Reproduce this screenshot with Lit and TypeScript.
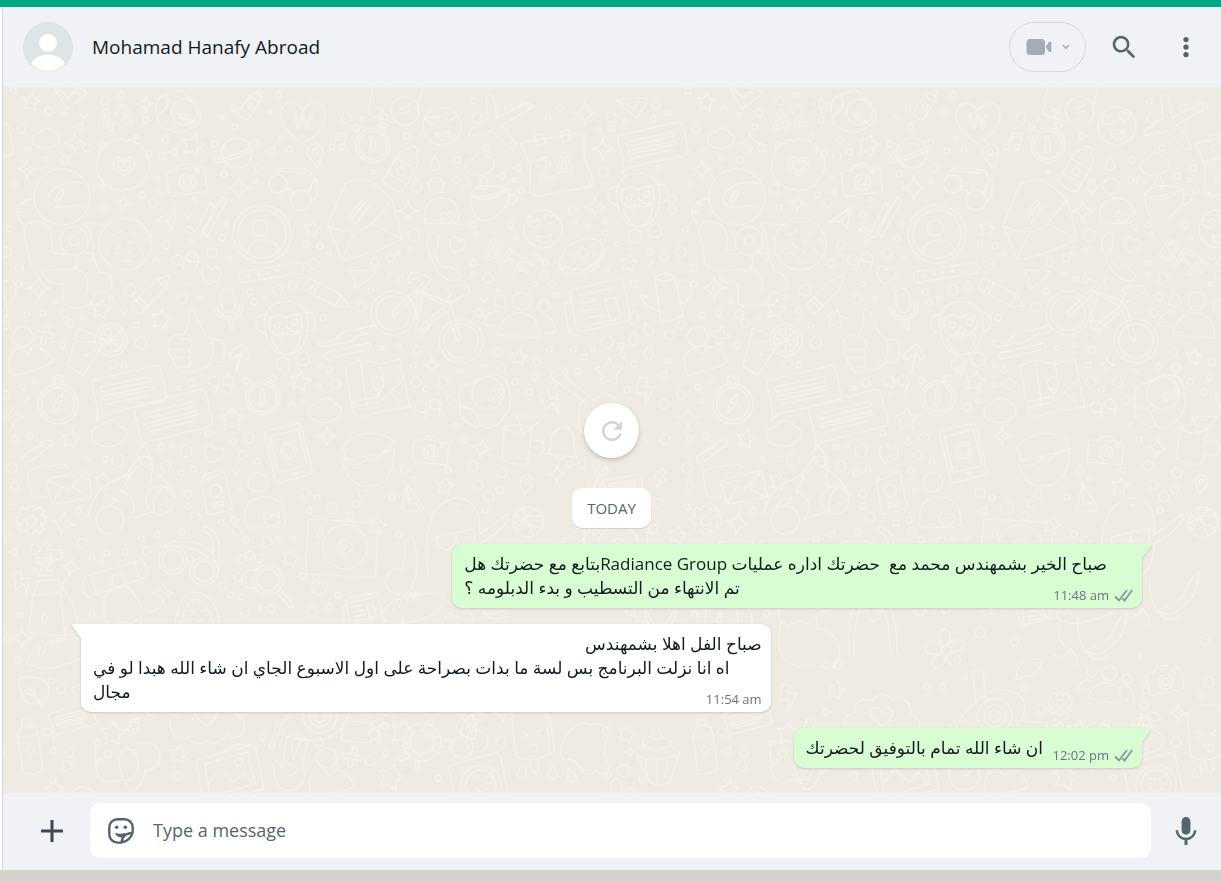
import { LitElement, html, svg, css, nothing } from "lit";
import { customElement, property } from "lit/decorators.js";

type Placement = [name: string, x: number, y: number, rotate?: number, scale?: number];

const TILE_WIDTH = 675;
const TILE_HEIGHT = 1000;

const ring = (x: number, y: number, r: number) =>
  `M${x - r} ${y}a${r} ${r} 0 1 0 ${2 * r} 0a${r} ${r} 0 1 0 ${-2 * r} 0`;

const HEART = "M0 8C-5 5-9 1-8-4C-7-8-2-8 0-4C2-8 7-8 8-4C9 1 5 5 0 8z";

const MOTIFS: Record<string, string> = {
  star: "M0-10L3-4L10-3L5 2L6 9L0 6L-6 9L-5 2L-10-3L-3-4z",
  spark: "M0-11Q1-1 11 0Q1 1 0 11Q-1 1-11 0Q-1-1 0-11z",
  heart: HEART,
  cloud: "M-12 6C-16-1-10-6-6-5C-3-12 7-11 8-5C15-4 15 4 9 7C4 12-8 11-12 6z",
  badge:
    "M-26 0q-3-5 2-8q-2-6 4-8q0-6 6-6q3-5 8-2q5-5 9 0q6-3 9 2q6 0 6 6q6 2 5 8q5 3 2 8q3 5-2 8q1 6-5 8q0 5-7 6q-3 4-8 2q-5 4-9 0q-6 3-9-3q-6 0-7-6q-5-2-4-8q-3-3 0-7z" +
    "M0 11C-6 7-12 3-11-3C-9-9-3-9 0-5C3-9 9-9 11-3C12 3 6 7 0 11zM0 7C-4 4-8 1-7-2C-6-6-2-5 0-2C2-5 6-6 7-2C8 1 4 4 0 7z",
  camera:
    "M-17-11h7l4-5h11l4 5h6q4 0 4 4v17q0 4-4 4h-31q-4 0-4-4v-17q0-4 3-4zM-3-12h7" +
    ring(0, 2, 8) + ring(0, 2, 4) + ring(12, -7, 2),
  planet: ring(0, 0, 15) + "M-12-6C-25 3-26 12-16 9C-2 6 26-4 21-12C19-14 15-12 12-10M-15 2C-22 7-18 8-12 5C2 1 24-9 16-9",
  pin: "M0 12C-4 5-8 1-8-4A8 8 0 0 1 8-4C8 1 4 5 0 12z" + ring(0, -4, 3),
  music: "M-3 7V-8L8-11V4" + ring(-5, 8, 3) + ring(6, 5, 3) + "M-3-4L8-7",
  sunglasses:
    ring(-17, -2, 9) + ring(6, 14, 10) + "M-9 4Q-3 2-2 8M-22-10Q-20-18-12-18L12-16Q18-14 17-10M-18-15L10-13M15 17L22 10V-6Q20-9 18-4L14 6",
  astronaut:
    ring(-5, -36, 28) +
    "M19-49C8-53-16-50-19-35C-20-20 2-28 19-28M-12-33l5-9q3-2 4 1l-5 9q-3 2-4-1z" +
    "M-33-35q-14 2-17 12q-1 11 8 15M-40-28l-5-3M-44-21l-6-1M-29-11Q-42-13-43-1L-37 29Q-35 36-28 36L5 37Q14 34 9 22L-15 20V5Q-17-10-29-11" +
    ring(7, 8, 14) + ring(7, 8, 5) +
    "M-24 38q0 12 20 13v18q6 8 20 5q12-3 12-14q18 0 17-11q-3-11-13-10l-4-12q-4-11-10-6M9 36q14 4 11 22M25 28q5-15-7-39l28 4",
  cookie: ring(0, 0, 26) + "M-12-9l9-4M-10 8l4 3M3-3l4 2M7-12l3 3M14 4l3 6M-4 4l-3-4M4 6l-1 4M-2 17h8M19-6l3 4M-21 4l6 6",
  send: "M-12 5L9-10L5 12L0 4zM0 4L6-5",
  checks: "M-19 9l4-4l8 6l14-29l5 3L-3 17zM-1 10l5 6l20-37l-5-3L4 5",
  profile: ring(0, 0, 29) + ring(0, 0, 24) + ring(-2, -6, 8) + "M-15 19Q-11 6 1 6Q13 6 17 15",
  password: "M-30-5h60q6 5 0 11h-60q-6-5 0-11z" + ring(-22, 0, 1) + ring(-12, 0, 1) + ring(-3, 0, 1) + ring(6, 0, 1),
  quotes: "M-3 9Q0 3-2 1Q-11 2-12-4Q-9-11-3-8Q3-3-3 9zM11 6Q14 0 12-2Q3-1 2-7Q5-14 11-11Q17-6 11 6z",
  pencil: "M-27-7h40l14 7l-14 7h-40q-4-6 0-14zM13-7v14M-20-7v14M-15-7v14",
  mic: "M-7-14a7 7 0 0 1 14 0v12a7 7 0 0 1-14 0zM-15-3q1 15 15 15t15-15M-12-3q1 12 12 12t12-12M-2 12l1 11q3 1 3-1V12",
  monkey:
    "M-20 4Q-27-27 0-29Q27-27 21 4Q17 24 0 25Q-17 24-20 4zM-21-16q-10 1-9 11q2 7 8 8M20-18q10 0 10 10q-1 8-8 10" +
    "M0-12Q-10-19-17-10Q-18 2-10 6Q-2 4 0-5Q6 5 13 1Q19-7 14-14Q6-18 0-12z" + ring(-9, -5, 3) + ring(9, -8, 3) +
    "M-14 9q4 14 14 16M-10 7q8-9 14-2l10-2q2 12-10 22M-6 10l3-6M0 8l2-4" + ring(-3, 34, 7) + ring(17, 29, 7),
  person: ring(-3, -17, 10) + "M-19 20q-5-25 12-26l7 7l6-7q14 4 18 18q-17 7-43 8z",
  lover: ring(-6, -23, 8) + "M-16 15q-5-24 14-26q20 0 19 21q-1 4-6 4zM4 14q-8-7-4-11q4-1 5 2q4-4 7 1q2 5-8 8z",
  drink: "M-15-22l-10 38l15 9l23-35zM-16-9l30 2" + ring(18, -10, 16) + ring(18, -10, 12) + "M8-10h20M18-20v20M11-17l14 14M25-17l-14 14" + ring(-7, 5, 1) + ring(2, 0, 1),
  thumb: "M-24-4q1-6 15-7q7-10 4-22q3-5 7 0q3 13 12 24l3 3l12 1q6 12-1 22h-9Q10 26-5 27q-12 1-11-5q-6-5-4-8q-5-5-4-9zM-22 5h16M-20 13h16M-16 22h12M-12-6h8q5 5 0 11q3 4 0 8q3 5 0 9M17 17q5-12 1-21",
  arrow: "M-4 15l5-16l-9 5l-4-3q4-6 14-12q4 4 8 14l-5 2l-4-7l-4 18q-2 3-1-1z",
  wrench: "M-26 3q10 3 17-1q6-9 20-9l18-5q5 4 0 7l-16 4q-6 8-20 7q-12 5-20 2zM-20 16l44-10q4 3 1 6l-44 10q-5-2-1-6z",
  speech: "M-34-17l67-1q5 1 5 6v28q-1 4-5 4h-64l-9 6l4-9V-13q0-3 2-4zM-27-8H24q4 3 0 5H-27q-3-3 0-5zM-27 2H24q3 3 0 4H-27q-3-2 0-4zM-25 11H18",
  compass: ring(0, 3, 20) + ring(0, 3, 16) + ring(0, -20, 6) + ring(0, -20, 3) + "M-5 12l2-12l8-8l-2 12zM-3 0l6 4",
  clock: ring(0, 0, 17) + ring(0, 0, 14) + "M-1-9q4 5 3 13q-3 6-6 3q3-7 1-15zM5-20q5-5 9 0l-3 4zM-15-14q-6 0-4-6q4-1 6 2z",
  envelope: "M-34 4L-17-37q12-7 27-2l20 17l10 40Q10 34-20 39L-34 4M-34 5Q-6 17 10 3L29-20M-20 38L-8 13M10 3q11 4 29 15M-13-4l13-17l3 2L-10-2zM-6 3l14-20",
  ticket: "M-24-24l-5 30l25 9M27-25l-7 28" + ring(8, 3, 14) + "M3 1l10-4M3 6l10-3M-21-1l12 9M-17 8l5-11M-14-25l2 4M10-22l2-3",
  smiley: ring(0, 0, 19) + "M-6 7Q2 9 8 5Q8 14 0 14Q-5 12-6 7zM-9-1q-9-4-5-8q4-1 5 2q3-5 6-1q1 4-6 7zM7-5q-8-4-4-9q3-1 5 2q4-4 6 0q1 4-7 7z",
  plane: "M-14-27q4-5 8 1l3 20l27-14q5-4 9 3l-31 18l14 19q-1 9-7 4L-8 7l-23 5q-1-6 6-9l13-9zM18-14l4-9q8 2 6 8",
  calendar: "M-36-25l61-11q3 0 2 4v20l10 26q-1 4-5 5l-50 9q-7 0-9-5v-26l-9-20zM-22-33l8-1l2 9l-8 3zM4-37l8-1l2 9l-8 3zM-24 23l3 5l54-10v-5M-28-7q12 0 20-5",
  plane2: "M-17-4l29-2q3 1 2 4l-10 16zM-17-4L2 5M2 5l3-7l5 0",
  bottle: "M-4-24h8v5q7 4 7 12v28q-10 5-22 0V-7q0-8 7-12zM-11-5h22M-11 12h22" + ring(0, 4, 4),
  cup: "M-22-7q15 12 38-6q4 12-8 24q-8 8-18 8q-11-4-12-26zM-22-7q7-15 38-6M-19-6q11 3 32-6M17-7q9-2 8 3q-2 7-11 7" ,
  phone: "M-13-17q5-5 9 0v11q0 3-4 4q1 10 10 18q5-4 9 0l8 7q-2 7-9 6Q-4 25-10 8Q-18-7-13-17z",
  donut: "M-23 6Q-17-14 5-17Q21-18 22-6Q21 12 3 18Q-17 22-21 13q-3-4-2-7zM-23 6l4 7l5-3l4 5l5-3l5 3L16 5l6-9" + ring(1, -3, 5) + "M-12 0l3-4M-7 6l-3-1M8-9l5-2M13-3l-3 3M3 6l3-2",
  nav: "M-14-9l26 1q0 4-20 18q0-11-6-19z",
  bicycle:
    ring(-34, -8, 22) + ring(-34, -8, 17) + ring(34, 20, 22) + ring(34, 20, 17) +
    "M-35-9l31-29l-8-5l-4 5q-6-2-2-7q3-9 22 3l-4 6l-33 32zM-10-31l24 9q8 3 11 9l9 30q-2 5-5 1l-9-29l-21 19h-10zM-5-27l24 12l-21 16l-7-2zM23-35h18q5 7-4 9l-12 7l-5-4l5-5q-8-1-2-7z" + ring(-2, 6, 4) + "M-2 11l-6 7M2 5l5-5",
  group: ring(0, -21, 9) + ring(-22, -21, 6) + ring(22, -16, 6) + "M-24 13q4-22 22-22q19 0 19 25zM-27 4l-12-1q4-16 17-13M21-7q12 2 13 17l-12 1",
  news: "M-24-19l46-10q5 0 5 4l6 34q0 3-3 4l-46 11q-4 0-5-3l-6-36q0-3 3-4zM-24-7l-9 2l5 29q3 5 10 3M-18-13l32-6M-17-5l17-3M-15 3l17-3M-13 11l19-4M-13 18l32-6M8-8l10-3l6 20l-11 3z",
  can: "M-12-19q9-10 20-2l8 38q-11 8-22 6zM-12-19q13 5 20-2M10-15q14-9 14 7q0 10-9 14M-7 6L-18 1q-5-5-8-4q1 11 22 18",
  drop: "M0-7Q7 4 3 6Q-1 9-4 5Q-6 1 0-7z",
  map: "M-32-20l15-6l20 4l20-5l10 48l-26 4l-20 5q-9 0-11-5zM-17-26l7 46M3-22l3 17M-24 21l26-5l26-24M-24 16l26-6M12 6l12 10M3-5" + ring(1, -3, 6) + "M-4 0l6 8l4-9",
  planet2: ring(1, -3, 16) + "M-17-12Q-30-15-27 12q17-3 20 17q11 9 24-8Q29 9 19-16Q9-28-17-12M-27 12q-3 12 17 19M2 5q0-13 14-12q2 8-14 12zM4 4l10-10",
  guitar: "M-34-25q-1-9 9-9l9 11l25 20q14-11 23 1q7 14-7 24q-1 13-13 13Q-12 31-5 14Q-9-2 0-1L-25-19zM-35-18l5-5M-31-14l4-6M-22-37l5 5M-17-32l-4 5" + ring(7, 14, 6),
  bolt: "M-6-12l9 1l-3 8l9 1l-9 17l1-12l-10 2z",
  clip: "M-14 5L6-9q9-5 9 2L-4 8q-8 6-11 1q-1-4 7-8L6-6",
  mail: "M-13 15h-11q-4 0-5-4L-32-8q0-4 3-5L2-18q4 0 5 4M-12-3l37-8q2 0 3 3l4 20q0 3-3 4L-5 22q-3 0-4-3l-5-18q0-3 2-4zM-13-2L9 8L26-10M-7 20L2 5M30 15L13 5",
  scooter: ring(-22, 30, 14) + ring(28, 10, 14) + "M-44 26Q-37-5-14-10q13-11 11-2l-8 13Q11 11-3 29l25-8q-2-15 8-23Q17-2 19-12Q25-40 6-32L-6-15l1 3L6-24M6-40q1 17 11 17q7-8-6-22M14-23q13 4 28 25q4 8-15 13M-30 17q0-7 15-9q-3 9-15 9z",
  gear: "M-3-14h6l1 4l5-3l4 5l-3 3l5 2l0 6l-5 1l3 5l-4 4l-5-3l-1 4h-6l-1-4l-5 3l-4-4l3-5l-4-1v-6l4-2l-3-3l4-5l5 3z" + ring(0, 1, 5),
  device: "M-18-29h32q5 0 5 5v49q0 5-5 5h-32q-5 0-5-5v-49q0-5 5-5zM-18-22h33v41h-33z" + ring(-1, -2, 9) + ring(-1, -2, 6) + ring(-1, 25, 2),
  pack: "M-15-15l25-5v35q0 4-4 4h-18q-4 0-4-4zM-15-15l5-6l14-1l6 2" + ring(-3, -3, 6) + "M-8 9h10v4h-10z",
  glasses: ring(-19, 0, 14) + ring(-19, 0, 10) + ring(12, 11, 14) + ring(12, 11, 10) + "M-6-3q7-3 8 4M-31-13l10-5q30-4 42 12M-31-13Q0-18 16-2M27 10V-14q-1-17-16-20v5q10 4 10 12v14",
  record: "M-34-26h62q4 0 4 4v47q0 4-4 4h-62q-4 0-4-4v-47q0-4 4-4z" + ring(0, 0, 22) + ring(0, 0, 7) + ring(0, 0, 2) + "M-29-8l3-11l4 7z",
  zzz: "M-3-14l4 9h10l2 8l-15 4l-2-5h6l-8-14zM-14 2l18 3l-9 10l7 1v4l-14 1l6-12l-8-2z",
  milk: "M-17-15l5-14l20-2l8 15q11 10 12 38q-4 3-14 3h-27q-7 0-8-4l4-36zM-17-15l27-3l5 43M10-18l5-12M-5 4q4 5 0 9q-7-1 0-9",
  board: "M-30-2Q-38 9-28 19l56-19q7-7-2-18zM-24-4l4 20M18-18l5 18" + ring(3, 3, 7) + "M-12 40V20q20-25 32 0q10 20 22 10",
  paw: ring(5, 0, 15) + ring(5, 0, 11) + "M14 13l13 15q5-1 2-5L18 10M-8 8q-16 0-12-12q1-6 17-7" + ring(-21, -21, 4) + ring(-13, -25, 4) + ring(-4, -22, 4) + ring(-25, -3, 4),
  face: "M-24 40q-2-60 20-64q28 0 28 60M-19 40q-1-50 16-57q20 2 21 57M-10-4q3-5 6 0M4-4q4-5 7 0M-2 4q3 4 6 0",
  bread: "M-28 10Q-26-8 0-12l30-4q10 6-5 22Q-12 22-28 10zM-17 3q3-14 8-12q0 6-2 8q4-14 9-12l-2 9q4-12 9-11l-3 9q4-11 10-10",
  leaf: "M-14-12Q12-16 16-2Q17 9 7 13Q-13 20-14-12zM-5-4L11 18M1-2l1 8l-9-3",
  can2: "M-10-16q1-8 10-9q9 1 10 9v38q-10 4-20 0zM-10-14h20M-4-25v-6h8v6" + ring(0, 0, 4),
  dog: "M-34-22q-4 43 18 35l20-2M-5 13q-14-26 4-35q28-11 31 10q1 12-14 15q-7 22-17 18zM-4-20q19 8 9 28" + ring(18, -6, 1) + "M29-8q-6 4 0 6",
  picture: "M-28-8l52-14q4 0 5 4l8 40l-60 14l-8-38q0-5 3-6zM-22-3l43-12l7 32l-45 13zM-18 16L-7 2l14 13l10-10l9 12M-10-13l22-10l10 2" + ring(12, -5, 4),
  peace: "M-16 4q3-7 6 0l2 4L-4-20q1-5 5-4L3 0l8-20q7-3 6 4L12 5q6 11-1 20q-10 9-22 2q-7-11-5-23zM-8 6q10-4 16 3q-6 9-10 6",
  burger: "M-25-10q17-21 43-12q12 5 7 9l-10 8l-35 7zM-23 0l6 7l10-1l7-5l8 2l6-7l11-4M-24 5q4 17 17 22Q28 34 27-10",
  mug: "M-14-17q15-7 28 0l-2 34q-12 5-26-2zM-14-17q10 9 28 0M14-5q13-5 13 6q-1 10-14 7",
  bell: "M-12 10q4-4 3-14q2-12 12-11q9 3 9 15q1 8 4 11zM-4 11q2 6 8 0M2-15q1-5 4 0",
  dude: "M-24 32Q-35-41 4-47Q30-45 26-10l27-20q4-1 3 3Q45-10 26-1q0 24-15 34M-17-8l38-8q3 17-9 18q-9 0-9-13q-1 15-9 16q-11-2-11-13" + ring(5, -40, 1),
  ball: ring(0, 0, 15) + "M-15 2Q0-8 14-6M-6-14Q-1 0 5 14M-12 8Q1-8 6-14M-12-8Q3 6 15 6",
  arm: "M-14 27q-12-6-4-20q4-6 14-3l2-19q-1-13 7-15q10 25 2 45Q2 35-14 27z",
  video: "M-17-10h28q3 0 3 4v3l8-6v20l-8-5v3q0 3-3 3h-28q-3 0-3-3v-16q0-3 3-3z",
  turtle: ring(0, 0, 19) + ring(0, 0, 12) + "M-5-12l2-7M9-8l5-6M-11-4l-7-3M-9 9l-5 6M4 12l2 7M12 2l7 2M-3-20q3-10 6 0M18-10q10-8 10 3l-8 3M-18-8l-9-4l1 8M-10 17l-6 8q6 3 11-6M6 19l2 8q-4 4-5-7",
  cherry: ring(-6, 9, 11) + ring(9, 3, 11) + "M-8-2Q-6-18 4-24L8-7M4-24q10-4 14 4q-8 7-14-4",
  pop: "M-18-24q16-14 34-4v46q-18 9-34 0zM-4 22v11q5 5 8 0V22M16-22q5 2 5 38l-5 3M-9-6l5 3l-5 3M9-6l-5 3l5 3M-4 8h9q1 7-4 7z",
  splash: "M-16-13q9-14 21-8q18-3 16 10q-8 16 2 28q-4 10-13 3q-8 8-14-2q-5-9-16-8q-6-8 4-23z",
  cake: "M-21 0q-2-9 8-8q-5-10 8-10q-1-8 5-9q6 5 5 10q12 0 8 9q12 1 8 9L13 27q-12 7-21-1zM-21 1q16 7 41-1M-11 7l2 18M0 7v20M11 5L9 23M-12-8q9 6 24-1M-5-18q6 4 11-1",
  cross: "M-3-10q3-3 5 0l0 6l6-1q3 2 0 5l-6 1l1 7q-3 4-5 0v-6l-7 1q-4-3 0-5l7-2z",
  card: "M-34-14L13-27q5 0 6 5l9 44L-23 36z" + ring(-1, 5, 20) + ring(-1, 5, 15) + "M-9 0q4-4 7 0M-7 8q6 6 13 0" + ring(7, 0, 4),
  flower: ring(0, 0, 5) + "M-4-4q-8-14 2-17q11 3 3 16q11-11 17-2q2 9-13 8q14 7 7 14q-8 4-12-8q-4 15-12 10q-5-6 5-13q-15 2-14-7q5-8 17-1z",
  guitar2: ring(8, 0, 17) + ring(8, 0, 11) + ring(8, 0, 6) + "M-34 17Q-26-2-13-12q17-20 42-11q14 10 6 26Q19 38-34 17zM-11-13L-14-45h10l3 27M-35 22l-4 8M-29 22l-4 8",
  blob: "M-34 10q-9-15 6-19q1-17 19-13q9-12 18 0q21-5 20 15q14 5 5 20q-10 6-12 0q-15 12-21 6q-12 7-20-3q-13 5-15-6zM0 4q-18-12-9-18q6-2 9 5q4-8 9-3q6 5-9 16z",
  octopus: "M-23-20Q-29 3-12 9q-8 12-18 5M-12 9q9 9 4 18M2 10q8 14 23 7M10 6q14-2 20-14q3-12 14-20Q42-2 29 5Q15 20 2 10Q-6 0-5-22",
  fish: "M-12 8Q-10-8 4-10q10-1 10 4q-5 14-19 13l-8 5z" + ring(8, -5, 1),
  cat: "M-28-14l8 5q8-7 18-2l9-8l2 13q14-1 20 15q5 13-5 23h-34q-21-7-20-25z",
};

const DOODLES: Placement[] = [
  ["plane2", 68, 92, 20, 1.2], ["star", 31, 102, 10, 0.9], ["spark", 146, 104, 0, 0.8], ["can2", 250, 106, 35, 0.6],
  ["planet2", 182, 112, 70, 0.8], ["cloud", 46, 138], ["spark", 75, 143], ["spark", 27, 169, 0, 0.9],
  ["badge", 124, 165], ["star", 193, 145, 15, 1.1], ["camera", 187, 180, -8, 1], ["planet", 237, 153],
  ["pin", 316, 156, -10, 1], ["music", 338, 141, 15, 0.9], ["spark", 239, 188, 0, 1.1], ["sunglasses", 295, 186],
  ["heart", 303, 122, 0, 2.7], ["astronaut", 67, 233], ["cookie", 125, 244], ["spark", 123, 203, 10, 0.7],
  ["send", 167, 217], ["checks", 203, 221], ["profile", 262, 234], ["star", 312, 229, 10, 0.8], ["envelope", 362, 221],
  ["password", 271, 272, -9, 1], ["heart", 211, 275, 10, 1.2], ["quotes", 184, 264], ["pencil", 153, 292, -45, 0.9],
  ["star", 101, 309, 10, 1], ["star", 161, 319, 10, 1], ["spark", 39, 288, 0, 1.1], ["mic", 229, 308, -8, 0.95],
  ["monkey", 286, 330], ["pencil", 328, 295, 28, 0.9], ["person", 28, 353, -8, 1], ["cross", 45, 336, 20, 0.9],
  ["drink", 93, 350], ["thumb", 193, 345], ["arrow", 240, 355], ["wrench", 345, 337], ["speech", 128, 389, -12, 0.95],
  ["speech", 172, 415, -14, 1], ["compass", 58, 401], ["clock", 263, 398], ["star", 300, 381, 10, 1],
  ["star", 232, 419, 0, 1.2], ["cloud", 325, 410, 0, 1.2], ["quotes", 219, 386, 10, 1],
  ["ticket", 397, 108], ["smiley", 442, 126], ["clock", 373, 145], ["plane", 500, 124], ["calendar", 557, 168],
  ["spark", 585, 113, 0, 1.1], ["spark", 603, 149], ["spark", 595, 207], ["spark", 408, 211], ["plane2", 633, 104],
  ["speech", 652, 144, -12, 0.9], ["monkey", 638, 202], ["bottle", 403, 168, 30, 1], ["cloud", 480, 164, -5, 1.1],
  ["cup", 492, 202], ["lover", 442, 209], ["smiley", 543, 229], ["phone", 442, 252], ["heart", 457, 245, 20, 1],
  ["donut", 582, 256], ["star", 629, 263, 10, 0.9], ["nav", 363, 279], ["bicycle", 427, 321], ["group", 522, 322],
  ["news", 597, 308], ["can", 667, 298], ["drop", 634, 317], ["drop", 648, 329, -25], ["drop", 634, 338, 10],
  ["drop", 649, 352], ["drop", 435, 163], ["drop", 417, 185], ["drop", 484, 182], ["map", 377, 386],
  ["spark", 432, 365, 0, 0.7], ["star", 519, 357, 10, 0.8], ["star", 609, 372, 0, 1.4], ["guitar", 585, 403],
  ["bolt", 645, 389], ["planet2", 487, 396], ["quotes", 427, 411], ["bolt", 551, 401, -30], ["nav", 530, 425],
  ["spark", 13, 417, 0, 1],
  ["clip", 37, 451], ["star", 71, 439, 10, 0.9], ["cloud", 109, 433, 0, 1.3], ["mail", 60, 482], ["star", 103, 481, 10, 0.9],
  ["scooter", 132, 490], ["gear", 31, 520], ["spark", 63, 523, 10, 1.1], ["heart", 213, 454, 20, 1.2],
  ["device", 290, 452, -14, 0.9], ["spark", 327, 436, 0, 0.9], ["pack", 219, 493, -12, 1], ["lover", 265, 510, 0, 1.2],
  ["glasses", 192, 560], ["record", 345, 547, 3, 1], ["zzz", 50, 555], ["spark", 71, 567, 10, 0.8], ["bolt", 22, 582, -20, 0.9],
  ["milk", 50, 610], ["board", 116, 578], ["spark", 163, 593], ["face", 198, 616], ["paw", 263, 580],
  ["star", 291, 558, 15, 0.9], ["heart", 319, 588, 20, 1], ["spark", 22, 638], ["bread", 55, 653], ["leaf", 33, 690],
  ["speech", 72, 718, -15, 0.6], ["star", 113, 733, 5, 1.2], ["can2", 30, 750, -8, 1], ["dog", 130, 768],
  ["star", 179, 754, 10, 0.9], ["picture", 227, 767], ["peace", 290, 760], ["person", 330, 775],
  ["cat", 134, 635], ["star", 161, 690, 15, 0.9], ["bolt", 113, 696], ["music", 132, 726, 15, 0.8], ["blob", 207, 722],
  ["flower", 271, 650], ["guitar2", 312, 716], ["fish", 353, 669], ["octopus", 408, 640], ["group", 433, 690, 5, 0.8],
  ["camera", 490, 680, -12, 0.9], ["gear", 385, 703, 0, 0.8], ["spark", 503, 713, 0, 0.8], ["star", 403, 732, 15, 1.2],
  ["drop", 279, 728], ["leaf", 468, 728, 200, 0.7],
  ["burger", 367, 458], ["camera", 431, 451, 5, 0.9], ["spark", 482, 448, 10, 0.9], ["mug", 517, 445, 5, 1],
  ["bell", 561, 444, 5, 1.1], ["spark", 557, 474, 0, 0.8], ["pin", 526, 485, 10, 0.8], ["star", 445, 486, 10, 0.9],
  ["plane2", 412, 500, 60, 1], ["dude", 453, 545], ["ball", 528, 522], ["star", 377, 525, 15, 0.9], ["arm", 407, 566],
  ["checks", 590, 486, 0, 0.8], ["speech", 623, 486, -8, 0.5], ["bolt", 661, 478, 30, 0.7], ["star", 2, 535, 10, 0.9],
  ["record", 618, 545, 5, 0.9], ["pencil", 575, 538, -40, 0.8], ["news", 362, 610, 0, 0.6], ["bread", 410, 608],
  ["paw", 655, 614], ["octopus", 480, 600],
  ["video", 360, 731, 5, 0.9], ["turtle", 422, 742, 25, 1], ["cherry", 468, 738], ["pop", 532, 737, -5, 1],
  ["splash", 585, 748, 0, 1.1], ["star", 627, 734, 15, 0.9], ["cake", 657, 755], ["cross", 352, 758, 20, 1],
  ["star", 391, 777, 15, 1.3], ["card", 482, 780], ["drop", 523, 771, 20], ["drop", 553, 772], ["drop", 571, 775, -20],
  ["star", 54, 790, 0, 1], ["face", 84, 806, 0, 0.8], ["flower", 618, 800], ["cloud", 640, 690], ["bolt", 600, 680],
];

/* x, y, radius triples */
const DOTS = [
  13,91,3,49,111,4,84,113,4,64,115,2,105,101,4,121,95,3,80,127,3,21,129,4,149,153,3,136,137,2,146,120,3,165,140,3,
  162,156,4,174,152,3,87,148,4,103,145,3,65,160,4,28,149,2,46,159,2,15,184,2,99,189,5,104,208,3,142,195,3,153,203,4,
  160,192,2,157,178,2,233,108,3,222,117,2,235,127,3,269,112,2,278,95,3,215,144,3,259,168,4,224,174,3,256,181,2,
  272,151,3,289,149,3,281,138,2,195,199,2,188,214,3,227,224,2,222,238,3,166,245,4,192,242,2,212,253,5,229,258,2,
  156,263,4,10,229,3,6,252,5,19,268,4,19,284,3,130,290,6,182,299,5,188,284,2,200,299,2,111,298,2,124,310,3,136,325,3,
  64,314,4,43,313,3,27,315,3,56,301,2,70,323,4,83,318,2,6,325,4,62,345,3,278,290,5,293,286,4,250,292,3,264,298,2,
  254,302,3,323,318,3,305,244,3,320,246,3,329,254,2,314,264,5,113,364,4,124,365,3,141,343,6,23,387,3,35,382,2,
  27,401,2,6,395,4,179,388,2,191,383,4,285,370,4,320,366,2,329,370,3,319,385,2,335,384,5,303,401,2,292,407,4,
  346,118,5,362,119,2,407,136,3,474,101,3,509,108,4,477,118,5,560,108,3,548,117,3,611,117,5,625,121,2,599,129,2,
  612,129,3,656,105,4,668,113,3,653,119,3,457,160,3,373,172,2,456,180,3,466,182,4,518,168,3,502,176,3,514,180,2,
  521,190,3,487,148,3,603,172,5,658,168,2,573,210,4,575,222,2,588,226,2,605,221,2,605,233,3,617,244,2,672,210,4,
  672,199,4,414,235,6,410,250,2,391,258,4,375,262,4,398,253,2,460,227,3,473,225,3,476,234,2,510,225,3,516,238,2,
  473,263,3,473,274,2,488,278,5,498,291,2,537,257,3,545,262,3,544,275,4,535,284,2,552,284,3,556,295,3,649,252,3,
  651,265,2,664,257,4,484,297,4,479,313,4,361,307,5,401,279,3,389,275,2,371,291,3,417,350,4,399,345,2,382,348,2,
  413,365,3,416,382,5,443,382,5,426,389,3,451,400,4,460,371,2,484,367,3,501,368,4,498,352,4,515,382,3,529,392,3,
  537,362,4,535,377,3,549,349,3,573,349,3,584,357,3,593,350,2,578,371,3,607,342,6,621,346,3,623,355,3,634,364,3,
  669,335,5,668,361,3,664,375,3,634,284,4,627,390,3,664,404,5,607,270,2,15,439,3,30,436,3,12,468,5,15,486,4,
  12,507,3,87,459,2,105,459,3,118,460,6,166,466,5,161,447,3,172,446,2,186,451,6,208,433,3,233,442,3,249,438,5,
  243,455,4,257,461,3,236,470,3,193,469,3,181,473,3,188,494,4,188,506,3,195,517,5,240,490,2,221,523,3,234,520,3,
  237,531,4,246,540,3,267,542,5,278,538,2,293,538,2,305,493,5,317,498,3,332,508,6,309,511,3,78,511,3,82,543,5,
  92,557,3,107,553,3,125,552,3,147,551,4,141,539,3,157,535,3,182,532,3,101,562,2,14,552,3,35,549,5,34,570,2,20,615,3,
  17,660,3,92,613,3,222,586,4,231,595,3,242,597,3,245,611,5,260,608,2,271,609,4,312,611,5,329,607,3,338,595,3,
  303,576,3,51,681,3,61,689,4,78,690,5,47,732,4,53,751,3,69,753,4,67,766,5,53,780,3,97,743,3,108,754,4,100,761,3,
  134,752,2,178,776,4,262,737,3,272,745,3,319,742,4,298,736,2,405,470,4,414,479,2,448,470,3,464,440,3,473,466,5,
  502,473,5,478,485,5,489,497,5,500,490,4,392,497,3,356,504,4,363,494,4,350,516,4,399,534,3,485,510,3,456,425,2,
  570,464,3,582,464,4,596,464,4,665,439,5,658,503,5,645,518,3,653,529,4,386,753,3,370,761,5,501,742,5,608,775,3,
  624,771,6,630,752,3,642,779,3,607,731,4,438,778,3,151,665,3,163,665,4,151,712,3,252,686,3,267,687,3,305,633,5,
  340,642,4,290,678,2,349,688,3,366,709,5,374,734,5,385,726,3,429,730,6,469,705,4,471,690,4,465,656,2,530,640,5,
  534,682,5,526,696,2,
];

const WORDS: [string, number, number, number, number][] = [
  ["42", 117, 129, -16, 30], ["24", 557, 178, -14, 32], ["BFF", 503, 268, 32, 28], ["W", 303, 129, 0, 20],
];

/** Repeats anything near a side edge of the tile on the opposite side. */
const wrapped = (x: number): number[] =>
  x < 60 ? [x, x + TILE_WIDTH] : x > TILE_WIDTH - 60 ? [x, x - TILE_WIDTH] : [x];

@customElement("chat-wallpaper")
export class ChatWallpaper extends LitElement {
  static styles = css`
    :host { display: block; min-width: 0; min-height: 0; overflow: hidden; background: #efeae2; }
    .art { display: block; width: 100%; height: 100%; }
    .line { fill: none; stroke: #f4f0ea; stroke-width: 1.6; stroke-linejoin: round; stroke-linecap: round; }
    .shape { vector-effect: non-scaling-stroke; }
    .word { font-family: "Inter", sans-serif; font-weight: 500; text-anchor: middle; stroke-width: 1.2; }
  `;

  render() {
    const dots = [];
    for (let i = 0; i < DOTS.length; i += 3) {
      for (const x of wrapped(DOTS[i])) dots.push(ring(x, DOTS[i + 1], DOTS[i + 2]));
    }
    return html`<svg class="art" aria-hidden="true">
      <defs>
        <pattern id="tile" x="-3" y="-87" width=${TILE_WIDTH} height=${TILE_HEIGHT} patternUnits="userSpaceOnUse">
          <g class="line">
            ${DOODLES.map(([name, px, y, rotate = 0, scale = 1]) =>
              wrapped(px).map(
                (x) => svg`<path class="shape" d=${MOTIFS[name]} transform="translate(${x} ${y}) rotate(${rotate}) scale(${scale})"></path>`,
              ),
            )}
            <path d=${dots.join("")}></path>
            ${WORDS.map(
              ([word, x, y, rotate, size]) =>
                svg`<text class="word" font-size=${size} transform="translate(${x} ${y}) rotate(${rotate})">${word}</text>`,
            )}
          </g>
        </pattern>
      </defs>
      <rect width="100%" height="100%" fill="url(#tile)"></rect>
    </svg>`;
  }
}

@customElement("chat-message")
export class ChatMessage extends LitElement {
  @property({ type: Boolean, reflect: true }) outgoing = false;
  @property() time = "";
  @property({ attribute: false }) lead = "";
  @property({ attribute: false }) lines: string[] = [];

  static styles = css`
    :host { display: flex; justify-content: flex-start; }
    :host([outgoing]) { justify-content: flex-end; }
    .bubble {
      position: relative; display: grid; box-sizing: border-box; max-width: 65%;
      padding: 8px 9px 8px 12px; border-radius: 0 10px 10px 10px; background: #fff;
      filter: drop-shadow(0 1px 1px rgba(11, 20, 26, 0.16));
    }
    .bubble.long { width: 65%; }
    .bubble.out { border-radius: 10px 0 10px 10px; background: #d9fdd3; }
    .bubble::before {
      content: ""; position: absolute; top: 0; right: 100%; width: 9px; height: 14px;
      background: inherit; clip-path: polygon(0 0, 100% 0, 100% 100%, 0 2px);
    }
    .bubble.out::before { right: auto; left: 100%; clip-path: polygon(0 0, 100% 0, 100% 2px, 0 100%); }
    .text, .meta { grid-area: 1 / 1; }
    .text { color: #111b21; font-size: 17px; line-height: 24px; }
    .lead { display: block; text-align: right; }
    .spacer { display: inline-block; width: 66px; }
    .out .spacer { width: 90px; }
    .meta {
      display: flex; align-items: center; gap: 5px; justify-self: end; align-self: end;
      height: 16px; margin-bottom: -3px; color: #667781; font-size: 13px; line-height: 16px;
    }
    .ticks { display: block; fill: none; stroke: #8696a0; stroke-width: 1.8; }
  `;

  render() {
    const long = this.lines.length > 1 ? "long" : "";
    return html`<div class="bubble ${this.outgoing ? "out" : ""} ${long}">
      <div class="text">
        ${this.lead ? html`<span class="lead" dir="rtl">${this.lead}</span>` : nothing}
        ${this.lines.map((line, i) => html`${i ? html`<br />` : nothing}<bdi dir="rtl">${line}</bdi>`)}<span class="spacer"></span>
      </div>
      <div class="meta">
        <span>${this.time}</span>
        ${this.outgoing
          ? html`<svg class="ticks" width="19" height="13" viewBox="0 0 19 13" role="img" aria-label="Delivered">
              <path d="M1 7.5L5 11.5L13 1M8.5 9.5L10.5 11.5L18.2 1"></path>
            </svg>`
          : nothing}
      </div>
    </div>`;
  }
}

@customElement("app-root")
export class AppRoot extends LitElement {
  static styles = css`
    :host {
      display: flex; flex-direction: column; box-sizing: border-box; min-height: 100vh;
      border-top: 7px solid #00a884; border-bottom: 12px solid #d5d1cc; background: #fff;
      font-family: "Open Sans", "Noto Sans", "DejaVu Sans", sans-serif; color: #111b21;
    }
    button { display: grid; place-items: center; padding: 0; border: 0; background: none; color: #54656f; cursor: pointer; }
    svg { display: block; fill: currentColor; }
    .panel { flex: 1; display: flex; flex-direction: column; margin-left: 2px; border-left: 1px solid #d1d7db; }
    .header { display: flex; align-items: center; height: 80px; padding: 0 20px; background: #f0f2f5; }
    .name { flex: 1; margin: 0 19px; font-size: 19px; font-weight: 400; line-height: 26px; }
    .tools { display: flex; align-items: center; }
    .call {
      display: flex; align-items: center; justify-content: center; gap: 10px; box-sizing: border-box;
      width: 77px; height: 50px; margin-right: 23px; border: 1px solid #d5d9dd; border-radius: 25px; color: #a4adb3;
    }
    .search { margin-right: 32px; }
    .chat { flex: 1; display: grid; }
    .wallpaper, .thread { grid-area: 1 / 1; }
    .thread {
      display: flex; flex-direction: column; justify-content: flex-end; gap: 16px;
      padding: 16px 79px 25px 78px; z-index: 1;
    }
    .reload {
      align-self: center; width: 55px; height: 55px; margin-bottom: 14px; border-radius: 50%;
      background: #fff; color: #cfd6da; box-shadow: 0 2px 4px rgba(11, 20, 26, 0.2);
    }
    .day {
      align-self: center; padding: 0 15px; border-radius: 10px; background: #fff; color: #54656f;
      font-size: 15px; line-height: 40px; box-shadow: 0 1px 1px rgba(11, 20, 26, 0.13);
    }
    .composer { display: flex; align-items: center; padding: 10px 20px 12px; background: #f0f2f5; }
    .attach { width: 57px; height: 55px; margin-right: 10px; color: #3b4a54; }
    .box { flex: 1; display: flex; align-items: center; height: 55px; padding: 0 18px; border-radius: 10px; background: #fff; }
    .field {
      flex: 1; min-width: 0; margin-left: 19px; padding: 0; border: 0; outline: 0; background: none;
      font-family: inherit; font-size: 18px; line-height: 25px; color: #111b21;
    }
    .field::placeholder { color: #54656f; opacity: 1; }
    .voice { margin-left: 20px; }
  `;

  render() {
    return html`<div class="panel">
      <header class="header">
        <svg width="50" height="50" viewBox="0 0 50 50" role="img" aria-label="Profile photo">
          <circle cx="25" cy="25" r="25" fill="#dfe5e7"></circle>
          <circle cx="25" cy="21" r="9" fill="#fff"></circle>
          <path fill="#fff" d="M8 41.5C12 35 18 32.5 25 32.5S38 35 42 41.5C37.5 46.500 31 49 25 49S12.500 46.500 8 41.500z"></path>
        </svg>
        <h1 class="name">Mohamad Hanafy Abroad</h1>
        <div class="tools">
          <button class="call" aria-label="Video call">
            <svg width="26" height="18" viewBox="0 0 26 18">
              <rect x="0.500" y="1" width="18.500" height="16" rx="3.500"></rect>
              <path d="M20 8.200L23 4.200Q25.300 2.500 25.300 5V13Q25.300 15.500 23 13.800L20 9.800z"></path>
            </svg>
            <svg width="8" height="6" viewBox="0 0 8 6"><path d="M1 1L4 4.200L7 1" fill="none" stroke="currentColor" stroke-width="1.500"></path></svg>
          </button>
          <button class="search" aria-label="Search">
            <svg width="30" height="30" viewBox="0 0 24 24">
              <path d="M15.900 14.300H15L14.700 14c1-1.100 1.600-2.700 1.600-4.300 0-3.700-3-6.700-6.700-6.700S3 6 3 9.700s3 6.700 6.700 6.700c1.600 0 3.200-.6 4.300-1.600l.3.3v.8l5.100 5.100 1.500-1.500-5-5.200zM9.700 14.300c-2.600 0-4.600-2.100-4.600-4.600s2.100-4.600 4.600-4.600 4.600 2.100 4.600 4.600-2 4.600-4.600 4.600z"></path>
            </svg>
          </button>
          <button aria-label="Menu">
            <svg width="30" height="30" viewBox="0 0 24 24">
              <circle cx="12" cy="6" r="2.100"></circle><circle cx="12" cy="12" r="2.100"></circle><circle cx="12" cy="18" r="2.100"></circle>
            </svg>
          </button>
        </div>
      </header>
      <main class="chat">
        <chat-wallpaper class="wallpaper"></chat-wallpaper>
        <div class="thread">
          <button class="reload" aria-label="Load earlier messages">
            <svg width="30" height="30" viewBox="0 0 24 24">
              <path d="M17.650 6.350A7.960 7.960 0 0 0 12 4c-4.420 0-7.990 3.580-7.990 8s3.570 8 7.990 8c3.730 0 6.840-2.550 7.730-6h-2.080A5.990 5.990 0 0 1 12 18c-3.310 0-6-2.690-6-6s2.690-6 6-6c1.660 0 3.140.69 4.220 1.780L13 11h7V4z"></path>
            </svg>
          </button>
          <div class="day">TODAY</div>
          <chat-message
            outgoing
            time="11:48 am"
            .lines=${[
              "صباح الخير بشمهندس محمد مع \u00a0حضرتك اداره عمليات Radiance Groupبتابع مع حضرتك هل",
              "تم الانتهاء من التسطيب و بدء الدبلومه ؟",
            ]}
          ></chat-message>
          <chat-message
            time="11:54 am"
            .lead=${"صباح الفل اهلا بشمهندس"}
            .lines=${["اه انا نزلت البرنامج بس لسة ما بدات بصراحة على اول الاسبوع الجاي ان شاء الله هبدا لو في", "مجال"]}
          ></chat-message>
          <chat-message outgoing time="12:02 pm" .lines=${["ان شاء الله تمام بالتوفيق لحضرتك"]}></chat-message>
        </div>
      </main>
      <footer class="composer">
        <button class="attach" aria-label="Attach">
          <svg width="24" height="24" viewBox="0 0 24 24"><path d="M10.500 1h3v9.500H23v3h-9.500V23h-3v-9.500H1v-3h9.500z"></path></svg>
        </button>
        <div class="box">
          <button aria-label="Stickers">
            <svg width="26" height="26" viewBox="0 0 26 26">
              <path fill="none" stroke="currentColor" stroke-width="2.400" stroke-linejoin="round"
                d="M13.500 24.600H9.500a8.200 8.200 0 0 1-8.200-8.200V9.500a8.200 8.200 0 0 1 8.200-8.200h7a8.200 8.200 0 0 1 8.200 8.200V14C24 19 19 24 13.500 24.600C14.500 18 17 15.500 24.500 15"></path>
              <circle cx="8.700" cy="9.300" r="1.800"></circle><circle cx="17.300" cy="9.300" r="1.800"></circle>
              <path d="M6.800 14.800Q12 16.800 17.500 14.800L15 19.200Q9 20.500 6.800 14.800z"></path>
            </svg>
          </button>
          <input class="field" type="text" aria-label="Type a message" placeholder="Type a message" />
        </div>
        <button class="voice" aria-label="Voice message">
          <svg width="30" height="30" viewBox="0 0 24 24">
            <path d="M12 14.942c2 0 3.531-1.530 3.531-3.531V4.350C15.531 2.350 14 .819 12 .819S8.469 2.350 8.469 4.350v7.061c0 2 1.530 3.531 3.531 3.531zM18.237 11.412c0 3.531-2.942 6.002-6.237 6.002s-6.237-2.471-6.237-6.002H3.761c0 4.001 3.178 7.297 7.061 7.885v3.884h2.354v-3.884c3.884-.588 7.061-3.884 7.061-7.885z"></path>
          </svg>
        </button>
      </footer>
    </div>`;
  }
}
